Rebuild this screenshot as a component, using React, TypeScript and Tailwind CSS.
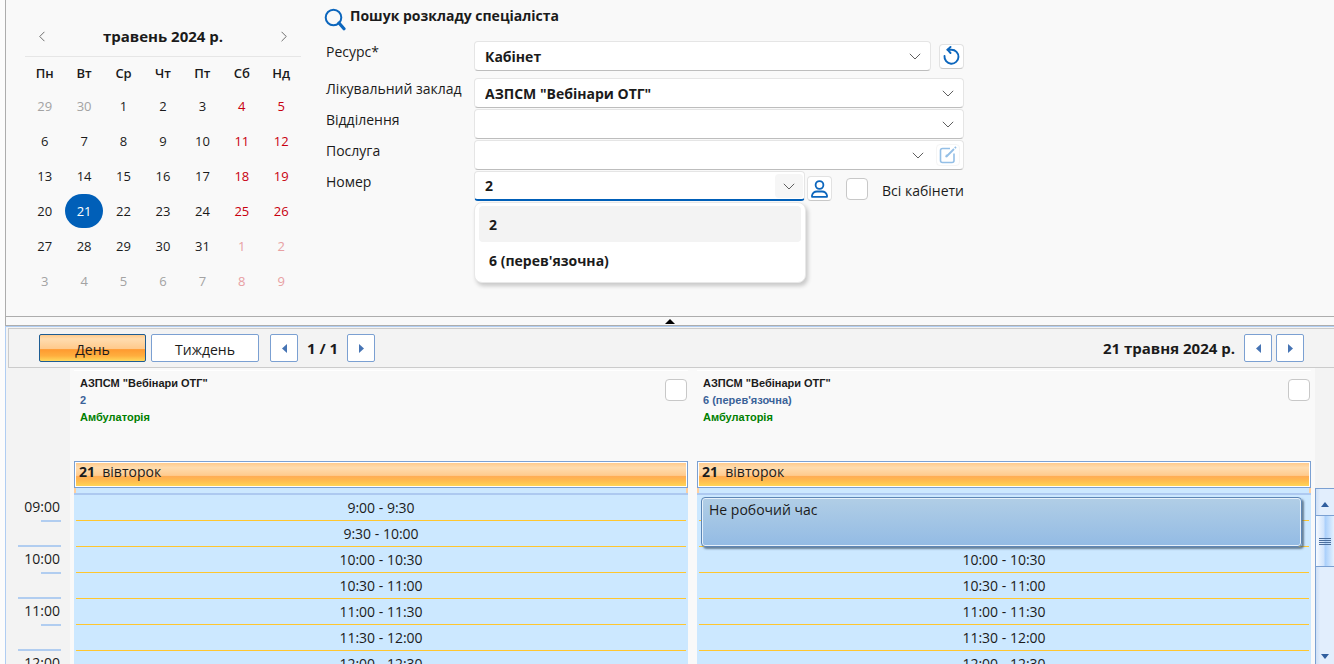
import React, { ReactNode, useState } from 'react';

const WEEKDAYS = ['Пн', 'Вт', 'Ср', 'Чт', 'Пт', 'Сб', 'Нд'];

const WEEKS = [
  [29, 30, 1, 2, 3, 4, 5],
  [6, 7, 8, 9, 10, 11, 12],
  [13, 14, 15, 16, 17, 18, 19],
  [20, 21, 22, 23, 24, 25, 26],
  [27, 28, 29, 30, 31, 1, 2],
  [3, 4, 5, 6, 7, 8, 9],
];

const SLOTS = [
  '9:00 - 9:30',
  '9:30 - 10:00',
  '10:00 - 10:30',
  '10:30 - 11:00',
  '11:00 - 11:30',
  '11:30 - 12:00',
  '12:00 - 12:30',
];

const HOURS = ['09:00', '10:00', '11:00', '12:00'];

const ROOMS = ['2', "6 (перев'язочна)"];

function isOtherMonth(week: number, day: number) {
  return (week === 0 && day > 7) || (week > 3 && day < 10);
}

function dayColor(week: number, day: number, col: number) {
  const other = isOtherMonth(week, day);
  if (col > 4) return other ? 'text-[#e8a0a3]' : 'text-[#c8000f]';
  return other ? 'text-[#a3a3a3]' : 'text-[#1b1b1b]';
}

function Chevron({ className = '' }: { className?: string }) {
  return (
    <svg className={className} width="12" height="7" viewBox="0 0 12 7" fill="none" stroke="#5f5f5f" strokeWidth="1">
      <path d="M0.8 0.8 L6 6 L11.2 0.8" />
    </svg>
  );
}

function Calendar() {
  const [selected, setSelected] = useState('3-21');

  return (
    <div className="w-[276px] shrink-0 pt-4">
      <div className="flex h-[41px] items-center justify-between border-b border-[#e6e6e6] px-[11px]">
        <button type="button" aria-label="Попередній місяць" className="flex h-6 w-3 items-center justify-center">
          <Chevron className="shrink-0 rotate-90 scale-90" />
        </button>
        <h2 className="text-[15px] leading-5 font-bold">травень 2024 р.</h2>
        <button type="button" aria-label="Наступний місяць" className="flex h-6 w-3 items-center justify-center">
          <Chevron className="shrink-0 -rotate-90 scale-90" />
        </button>
      </div>
      <table className="w-full table-fixed text-center text-[13px] leading-5">
        <thead>
          <tr className="h-[31px]">
            {WEEKDAYS.map((name) => (
              <th key={name} className="p-0 text-[13px] font-semibold">{name}</th>
            ))}
          </tr>
        </thead>
        <tbody>
          {WEEKS.map((week, w) => (
            <tr key={w} className="h-[35px]">
              {week.map((day, col) => {
                const key = `${w}-${day}`;
                return (
                  <td key={key} className="p-0">
                    <button
                      type="button"
                      onClick={() => setSelected(key)}
                      className={`mx-auto block h-[34px] w-[38px] rounded-full ${
                        key === selected ? 'bg-[#005fb8] text-white' : dayColor(w, day, col)
                      }`}
                    >
                      {day}
                    </button>
                  </td>
                );
              })}
            </tr>
          ))}
        </tbody>
      </table>
    </div>
  );
}

interface FieldProps {
  id: string;
  label: string;
  value: string;
  wide?: boolean;
  extra?: ReactNode;
}

function Field({ id, label, value, wide, extra }: FieldProps) {
  return (
    <>
      <label htmlFor={id} className="leading-[22px]">{label}</label>
      <div className="flex items-center gap-2">
        <div className="relative flex-1">
          <select
            id={id}
            className="h-[30px] w-full appearance-none rounded border border-[#e5e5e5] border-b-[#bdbdbd] bg-white px-2.5 font-bold"
          >
            <option>{value}</option>
          </select>
          <Chevron className={`pointer-events-none absolute top-3 ${wide ? 'right-10' : 'right-2.5'}`} />
          {wide && (
            <button
              type="button"
              aria-label="Редагувати послугу"
              className="absolute top-1 right-1 flex h-[22px] w-6 items-center justify-center rounded border border-[#f5f5f5]"
            >
              <svg width="18" height="18" viewBox="0 0 18 18" fill="none" stroke="#94bfe6" strokeWidth="1.6">
                <path d="M11 2.500H3.500Q1.500 2.500 1.500 4.500V14.500Q1.500 16.500 3.500 16.500H13Q15 16.500 15 14.500V7.500" />
                <path d="M7.500 10.500L15 3M7 11.300L7.800 8.800M15.800 2.200L17 1" strokeWidth="1.8" />
              </svg>
            </button>
          )}
        </div>
        {extra}
      </div>
    </>
  );
}

function RoomField() {
  const [room, setRoom] = useState(ROOMS[0]);

  return (
    <>
      <label htmlFor="room" className="leading-[22px]">Номер</label>
      <div className="flex items-start">
        <div className="relative w-[331px]">
          <select
            id="room"
            value={room}
            onChange={(e) => setRoom(e.target.value)}
            className="h-[30px] w-full appearance-none rounded border border-[#e5e5e5] border-b-2 border-b-[#005fb8] bg-white px-2.5 font-bold"
          >
            {ROOMS.map((r) => (
              <option key={r}>{r}</option>
            ))}
          </select>
          <span className="pointer-events-none absolute top-[3px] right-0.5 flex h-6 w-7 items-center justify-center rounded bg-[#f6f6f6]">
            <Chevron />
          </span>
          <ul className="absolute top-[31px] left-0 z-10 h-[81px] w-[332px] rounded-lg border border-[#e8e8e8] bg-white px-1 py-[3px] shadow-[2px_3px_4px_rgba(0,0,0,0.2)]">
            {ROOMS.map((r) => (
              <li key={r}>
                <button
                  type="button"
                  onClick={() => setRoom(r)}
                  className={`block h-9 w-full rounded px-2.5 text-left font-bold ${r === room ? 'bg-[#f3f3f3]' : ''}`}
                >
                  {r}
                </button>
              </li>
            ))}
          </ul>
        </div>
        <button
          type="button"
          aria-label="Вибрати спеціаліста"
          className="mt-[5px] ml-0.5 flex size-[25px] items-center justify-center rounded border border-[#e2e2e2] border-b-[#c8c8c8] bg-white"
        >
          <svg width="18" height="18" viewBox="0 0 18 18" fill="none" stroke="#0c66bd" strokeWidth="1.8">
            <circle cx="8.500" cy="5" r="3.900" />
            <path d="M1 16.800V15.500Q2 11.500 6 11.500H11Q15 11.500 16 15.500V16.800Z" strokeLinejoin="round" />
          </svg>
        </button>
        <label className="mt-[7px] ml-[14px] flex items-end gap-[14px] leading-[18px] whitespace-nowrap">
          <input type="checkbox" className="size-[22px] appearance-none rounded border border-[#c8c8c8] bg-white" />
          Всі кабінети
        </label>
      </div>
    </>
  );
}

function SearchForm() {
  return (
    <form className="w-[638px] pt-1">
      <h1 className="flex h-[37px] items-start gap-1 text-[14px] leading-6 font-bold">
        <svg className="mt-1 -ml-0.5" width="22" height="23" viewBox="0 0 22 23" fill="none" stroke="#0c66bd">
          <circle cx="9.500" cy="9.500" r="7.800" strokeWidth="2" />
          <path d="M15 15L20 20.800" strokeWidth="3.200" strokeLinecap="round" />
        </svg>
        Пошук розкладу спеціаліста
      </h1>
      <div className="grid grid-cols-[148px_1fr] gap-y-px">
        <Field
          id="resource"
          label="Ресурс*"
          value="Кабінет"
          extra={
            <button
              type="button"
              aria-label="Оновити"
              className="flex size-[25px] items-center justify-center rounded border border-[#e2e2e2] border-b-[#c8c8c8] bg-white"
            >
              <svg width="18" height="20" viewBox="0 0 18 20" fill="none" stroke="#0c66bd" strokeWidth="1.9">
                <path d="M1.500 10A7 7 0 1 0 8.500 3.700H4.500" strokeLinecap="round" />
                <path d="M7.500 1L4.500 3.700L7.500 7" strokeLinecap="round" strokeLinejoin="round" />
              </svg>
            </button>
          }
        />
        <div className="col-span-2 h-[5px]" />
        <Field id="facility" label="Лікувальний заклад" value={'АЗПСМ "Вебінари ОТГ"'} />
        <Field id="department" label="Відділення" value="" />
        <Field id="service" label="Послуга" value="" wide />
        <RoomField />
      </div>
    </form>
  );
}

function ArrowButton({ label, left }: { label: string; left?: boolean }) {
  return (
    <button
      type="button"
      aria-label={label}
      className="flex h-7 w-7 items-center justify-center rounded-xs border border-[#7ba0d2] bg-white"
    >
      <svg width="5" height="9" viewBox="0 0 5 9" fill="#4674b4">
        <path d={left ? 'M5 0V9L0 4.500Z' : 'M0 0V9L5 4.500Z'} />
      </svg>
    </button>
  );
}

function Toolbar() {
  return (
    <div className="flex h-10 shrink-0 items-center border border-r-0 border-[#cbcbcb] bg-[#f3f3f3] pr-[30px] pl-[30px]">
      <button
        type="button"
        className="h-7 w-[107px] rounded-xs border border-[#1d5c93] bg-[linear-gradient(#ffca8b,#ffdcae_15%,#ffc98a_54%,#ff9a30_56%,#ffae3e_80%,#ffd85c)] pt-1 text-[14px] leading-[22px]"
      >
        День
      </button>
      <button type="button" className="ml-[5px] h-7 w-[108px] rounded-xs border border-[#7ba0d2] bg-white pt-1 text-[14px] leading-[22px]">
        Тиждень
      </button>
      <div className="ml-[11px] flex items-center gap-[9px]">
        <ArrowButton label="Попередня сторінка" left />
        <span className="text-[15px] font-bold">1 / 1</span>
        <ArrowButton label="Наступна сторінка" />
      </div>
      <span className="mr-[9px] ml-auto text-[15px] font-bold">21 травня 2024 р.</span>
      <div className="flex gap-1">
        <ArrowButton label="Попередній день" left />
        <ArrowButton label="Наступний день" />
      </div>
    </div>
  );
}

function TimeRuler() {
  return (
    <div className="flex w-[62px] shrink-0 flex-col items-end pt-[127px] pr-[9px]">
      {HOURS.map((hour) => (
        <div key={hour} className="flex h-[52px] w-[43px] shrink-0 flex-col items-end border-b-2 border-[#b1cdf0] text-[14px]">
          <span className="h-[25px] pr-px leading-6">{hour}</span>
          <span className="h-0.5 w-5 bg-[#b1cdf0]" />
        </div>
      ))}
    </div>
  );
}

function RoomColumn({ room, busy }: { room: string; busy?: string }) {
  // slots under a busy block stay in the list, only their text is dropped
  return (
    <section className="flex min-w-0 flex-1 flex-col border-t border-white">
      <header className="flex h-[90px] shrink-0 justify-between pt-1 pl-1.5 font-['Liberation_Sans',Arial,sans-serif] text-[11px] leading-[17px] font-bold">
        <div>
          <p>АЗПСМ "Вебінари ОТГ"</p>
          <p className="text-[#3a6298]">{room}</p>
          <p className="text-[#008000]">Амбулаторія</p>
        </div>
        <input
          type="checkbox"
          aria-label={`Вибрати кабінет ${room}`}
          className="mt-1 mr-px size-[22px] appearance-none rounded border border-[#c8c8c8] bg-white"
        />
      </header>
      <div className="h-[27px] shrink-0 border border-[#7ba0d2] bg-white p-px">
        <div className="h-full bg-[linear-gradient(#ffca8b,#ffdcae_20%,#ffcb8e_54%,#ffad55_58%,#ffb94f_75%,#ffd455)] pl-[3px] text-[14px] leading-[17px]">
          <b>21</b>&nbsp; вівторок
        </div>
      </div>
      <div className="h-[5px] shrink-0 border-x-2 border-[#ffd0a0] bg-[#cce8ff]" />
      <div className="relative flex-1 border-t-2 border-t-[#adc9f0] bg-[#cce8ff]">
        {SLOTS.map((slot, i) => (
          <div key={slot} className="mx-0.5 h-[26px] border-b border-b-[#ffc62e] text-center text-[14px] leading-[26px]">
            {busy && i < 2 ? '' : slot}
          </div>
        ))}
        {busy && (
          <div className="absolute top-0.5 right-[9px] left-1 h-[50px] rounded border border-[#5d86b5] bg-[linear-gradient(#b1cee6,#93bbe4)] px-[7px] text-[14px] leading-6 shadow-[inset_0_0_0_1px_#e6f0fa,2px_2px_2px_rgba(60,85,110,0.7)]">
            {busy}
          </div>
        )}
      </div>
    </section>
  );
}

function ScrollBar() {
  return (
    <div className="flex w-[19px] shrink-0 flex-col bg-[#f3f3f3] pt-[120px]">
      <div className="flex flex-1 flex-col border-t border-l border-[#7ba0d2] bg-[linear-gradient(90deg,#cfe0f7,#e2eefd_25%)]">
        <button type="button" aria-label="Вгору" className="flex h-[27px] items-center justify-center border-b border-[#7ba0d2] pt-1">
          <svg width="8" height="5" viewBox="0 0 8 5" fill="#305f9f"><path d="M4 0L8 5H0Z" /></svg>
        </button>
        <div className="flex h-[51px] flex-col items-center justify-center gap-px border-b border-[#7ba0d2] bg-[linear-gradient(90deg,#f6faff,#cfe3fc_45%,#a9cffb_50%,#e3f1ff)]">
          <span className="h-px w-3 bg-[#4c6f9d]" />
          <span className="h-px w-3 bg-[#4c6f9d]" />
          <span className="h-px w-3 bg-[#4c6f9d]" />
          <span className="h-px w-3 bg-[#4c6f9d]" />
        </div>
        <button type="button" aria-label="Вниз" className="mt-auto flex h-4 items-center justify-center">
          <svg width="8" height="5" viewBox="0 0 8 5" fill="#305f9f"><path d="M4 5L8 0H0Z" /></svg>
        </button>
      </div>
    </div>
  );
}

export default function App() {
  return (
    <div className="h-screen overflow-hidden bg-[#fcfcfc] pl-[5px] font-['Open_Sans','Noto_Sans',sans-serif] text-[#1b1b1b]">
      <div className="flex h-full flex-col">
        <div className="flex h-[317px] shrink-0 gap-[25px] border-b border-l border-[#adadad] bg-[#f9f9f9] pl-[19px] text-[14px]">
          <Calendar />
          <SearchForm />
        </div>
        <button
          type="button"
          aria-label="Згорнути панель пошуку"
          className="flex h-[9px] w-full shrink-0 items-center justify-center border-b border-l border-[#adadad] bg-[#f9f9f9]"
        >
          <svg width="10" height="5" viewBox="0 0 10 5"><path d="M5 0L10 5H0Z" /></svg>
        </button>
        <div className="flex min-h-0 flex-1 flex-col border-t border-l border-[#b0cdf2] bg-[#f3f3f3] pt-px pl-0.5">
          <Toolbar />
          <div className="flex min-h-0 flex-1">
            <TimeRuler />
            <div className="flex min-w-0 flex-1 gap-[9px] bg-[#f9f9f9] pt-0.5 pr-1 pl-1">
              <RoomColumn room="2" />
              <RoomColumn room="6 (перев'язочна)" busy="Не робочий час" />
            </div>
            <ScrollBar />
          </div>
        </div>
      </div>
    </div>
  );
}
